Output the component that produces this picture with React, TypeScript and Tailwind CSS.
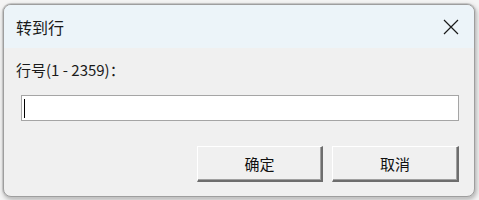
import React from "react";

export default function App() {
  return (
    <div
      className="w-[479px] h-[200px] bg-[#f4f4f4] pt-[3px] pl-[2px] overflow-hidden"
      style={{ fontFamily: '"Noto Sans CJK SC", "Noto Sans", sans-serif' }}
    >
      <div className="w-[474px] h-[195px] rounded-[9px] bg-[#c4c4c4] p-[1px] shadow-[1px_2px_4px_rgba(0,0,0,0.25)]">
        <div className="w-full h-full rounded-[8px] border border-[#9e9e9e] bg-[#f0f0f0] overflow-hidden flex flex-col">
          <div className="h-[43px] bg-[#ecf4f9] flex items-center justify-between pl-[12px] pr-[15px] shrink-0">
            <span className="text-[16px] leading-[20px] text-[#1a1a1a] mt-[1px]">转到行</span>
            <svg width="16" height="16" viewBox="0 0 16 16" className="mt-[1px]">
              <path d="M1 1 L15 15 M15 1 L1 15" stroke="#1a1a1a" strokeWidth="1.2" fill="none" />
            </svg>
          </div>
          <div className="flex flex-col pl-[11px] pr-[14px]">
            <div className="mt-[12px] ml-[1px] text-[15px] leading-[20px] text-[#1a1a1a]">行号(1 - 2359)：</div>
            <div className="mt-[15px] ml-[6px] w-[438px] h-[26px] border border-[#a5a5a5] bg-white flex items-center pl-[2px]">
              <div className="w-[1px] h-[19px] bg-black" />
            </div>
            <div className="mt-[25px] flex justify-end gap-[9px] mr-[1px]">
              <button className="w-[126px] h-[36px] bg-[#f0f0f0] border-t border-l border-t-white border-l-white border-r-[2px] border-b-[2px] border-r-[#6d6d6d] border-b-[#6d6d6d] text-[15px] leading-[20px] text-[#111] flex items-center justify-center shadow-[inset_-1px_-1px_0_#a0a0a0]">
                确定
              </button>
              <button className="w-[127px] h-[36px] bg-[#f0f0f0] border-t border-l border-t-white border-l-white border-r-[2px] border-b-[2px] border-r-[#6d6d6d] border-b-[#6d6d6d] text-[15px] leading-[20px] text-[#111] flex items-center justify-center shadow-[inset_-1px_-1px_0_#a0a0a0]">
                取消
              </button>
            </div>
          </div>
        </div>
      </div>
    </div>
  );
}
